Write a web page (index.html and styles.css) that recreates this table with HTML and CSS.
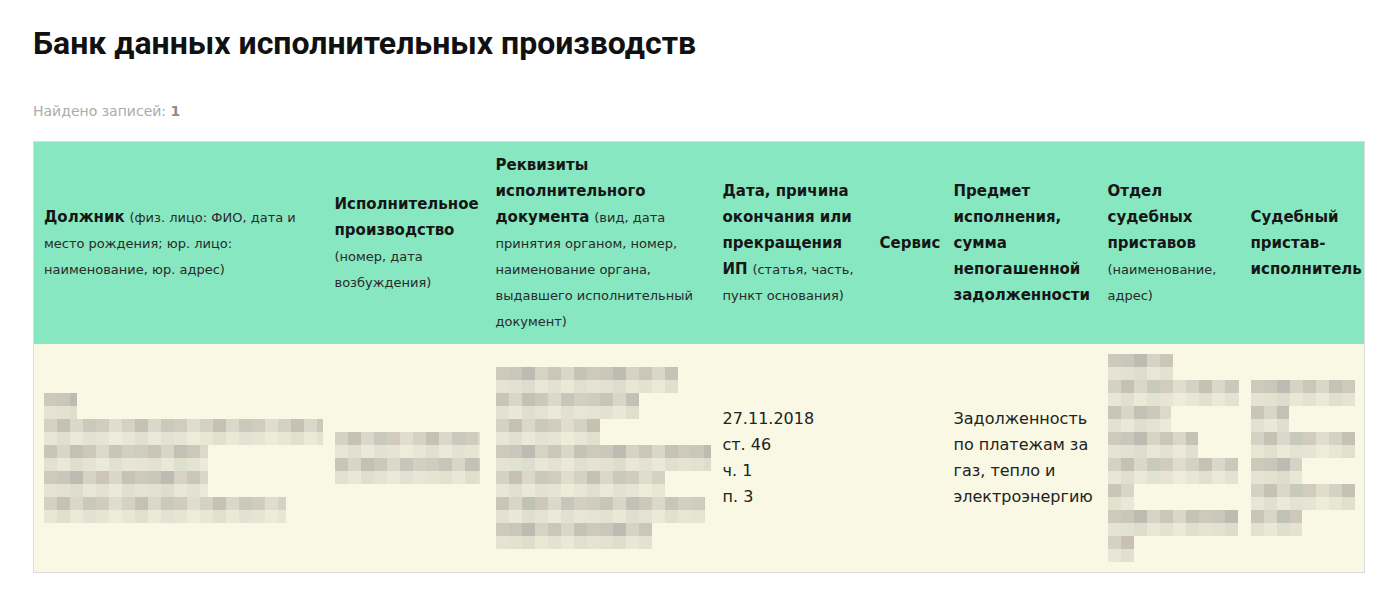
FILE: index.html
```html
<!DOCTYPE html>
<html lang="ru">
<head>
<meta charset="utf-8">
<title>Банк данных исполнительных производств</title>
<link rel="stylesheet" href="styles.css">
</head>
<body>
<main class="page">
  <h1 class="title">Банк данных исполнительных производств</h1>
  <p class="found">Найдено записей: <b>1</b></p>
  <table class="results">
    <colgroup>
      <col class="c1"><col class="c2"><col class="c3"><col class="c4"><col class="c5"><col class="c6"><col class="c7"><col class="c8">
    </colgroup>
    <thead>
      <tr>
        <th><b>Должник</b> <span class="hint">(физ. лицо: ФИО, дата и место рождения; юр. лицо: наименование, юр. адрес)</span></th>
        <th><b>Исполнительное производство</b> <span class="hint">(номер, дата возбуждения)</span></th>
        <th><b>Реквизиты исполнительного документа</b> <span class="hint">(вид, дата принятия органом, номер, наименование органа, выдавшего исполнительный документ)</span></th>
        <th><b>Дата, причина окончания или прекращения ИП</b> <span class="hint">(статья, часть, пункт основания)</span></th>
        <th><b>Сервис</b></th>
        <th><b>Предмет исполнения, сумма непогашенной задолженности</b></th>
        <th><b>Отдел судебных приставов</b> <span class="hint">(наименование, адрес)</span></th>
        <th><b>Судебный пристав-исполнитель</b></th>
      </tr>
    </thead>
    <tbody>
      <tr>
        <td>
          <div class="blur">
            <span class="px v1" style="width:33px"></span>
            <span class="px v2" style="width:282px"></span>
            <span class="px v3" style="width:164px"></span>
            <span class="px v1" style="width:164px"></span>
            <span class="px v2" style="width:242px"></span>
          </div>
        </td>
        <td>
          <div class="blur">
            <span class="px v2" style="width:145px"></span>
            <span class="px v3" style="width:145px"></span>
          </div>
        </td>
        <td>
          <div class="blur">
            <span class="px v1" style="width:182px"></span>
            <span class="px v3" style="width:143px"></span>
            <span class="px v2" style="width:104px"></span>
            <span class="px v1" style="width:220px"></span>
            <span class="px v2" style="width:169px"></span>
            <span class="px v3" style="width:209px"></span>
            <span class="px v1" style="width:156px"></span>
          </div>
        </td>
        <td class="text">27.11.2018<br>ст. 46<br>ч. 1<br>п. 3</td>
        <td></td>
        <td class="text">Задолженность по платежам за газ, тепло и электроэнергию</td>
        <td>
          <div class="blur">
            <span class="px v1" style="width:65px"></span>
            <span class="px v2" style="width:131px"></span>
            <span class="px v3" style="width:63px"></span>
            <span class="px v1" style="width:90px"></span>
            <span class="px v2" style="width:130px"></span>
            <span class="px v3" style="width:26px"></span>
            <span class="px v1" style="width:130px"></span>
            <span class="px v2" style="width:26px"></span>
          </div>
        </td>
        <td>
          <div class="blur">
            <span class="px v1" style="width:104px"></span>
            <span class="px v3" style="width:38px"></span>
            <span class="px v2" style="width:104px"></span>
            <span class="px v1" style="width:51px"></span>
            <span class="px v2" style="width:104px"></span>
            <span class="px v3" style="width:51px"></span>
          </div>
        </td>
      </tr>
    </tbody>
  </table>
</main>
</body>
</html>
```

FILE: styles.css
```css
html, body {
  margin: 0;
  padding: 0;
  background: #ffffff;
}

.page {
  padding: 24px 33px 0 33px;
  font-family: "DejaVu Sans", "Noto Sans", sans-serif;
  color: #1b1b1b;
}

.title {
  margin: 0;
  font-family: Roboto, "Liberation Sans", sans-serif;
  font-size: 32px;
  line-height: 38px;
  font-weight: 700;
  color: #111;
}

.found {
  margin: 41px 0 22px 0;
  font-family: "DejaVu Sans", sans-serif;
  font-size: 14px;
  line-height: 16px;
  color: #ababab;
}

.found b {
  color: #8c8c8c;
}

.results {
  width: 1332px;
  table-layout: fixed;
  border-collapse: collapse;
  border: 1px solid #dcdcdc;
}

.c1 { width: 291px; }
.c2 { width: 161px; }
.c3 { width: 227px; }
.c4 { width: 157px; }
.c5 { width: 74px; }
.c6 { width: 154px; }
.c7 { width: 143px; }
.c8 { width: 124px; }

.results th {
  background: #86e7c0;
  text-align: left;
  vertical-align: middle;
  padding: 10px 2px 10px 10px;
  font-size: 15px;
  line-height: 26px;
  font-weight: 400;
  color: #161616;
}

.results th:last-child {
  padding-right: 0;
}

.results th b {
  font-weight: 700;
}

.hint {
  font-size: 13px;
  line-height: 16px;
  color: #2a2a2a;
}

.results td {
  background: #f8f8e4;
  vertical-align: middle;
  padding: 10px 2px 10px 10px;
  font-size: 16px;
  line-height: 26px;
  color: #222;
}

.blur {
  display: flex;
  flex-direction: column;
  align-items: flex-start;
}

.px {
  display: block;
  height: 26px;
  max-width: 100%;
}

.v1 {
  background-image:
    linear-gradient(to bottom, rgba(248,248,228,0) 50%, rgba(248,248,228,0.55) 50%),
    repeating-linear-gradient(90deg, #cfc9bb 0 13px, #c8c7b9 13px 26px, #bdbcb2 26px 39px, #d6d3c4 39px 52px, #cbc6b7 52px 65px, #d9d8c8 65px 78px, #c4c3b6 78px 91px);
}

.v2 {
  background-image:
    linear-gradient(to bottom, rgba(248,248,228,0) 50%, rgba(248,248,228,0.55) 50%),
    repeating-linear-gradient(90deg, #d4d2c4 0 13px, #c6c1b3 13px 26px, #dad8ca 26px 39px, #c9c9bc 39px 52px, #d1ccbe 52px 65px, #e0ddcc 65px 78px);
}

.v3 {
  background-image:
    linear-gradient(to bottom, rgba(248,248,228,0) 50%, rgba(248,248,228,0.55) 50%),
    repeating-linear-gradient(90deg, #c9c5b8 0 13px, #d8d6c7 13px 26px, #c2c1b5 26px 39px, #cdc8ba 39px 52px, #dbd9ca 52px 65px, #c6c6ba 65px 78px, #d3cfc1 78px 91px, #cfcdbf 91px 104px);
}
```
